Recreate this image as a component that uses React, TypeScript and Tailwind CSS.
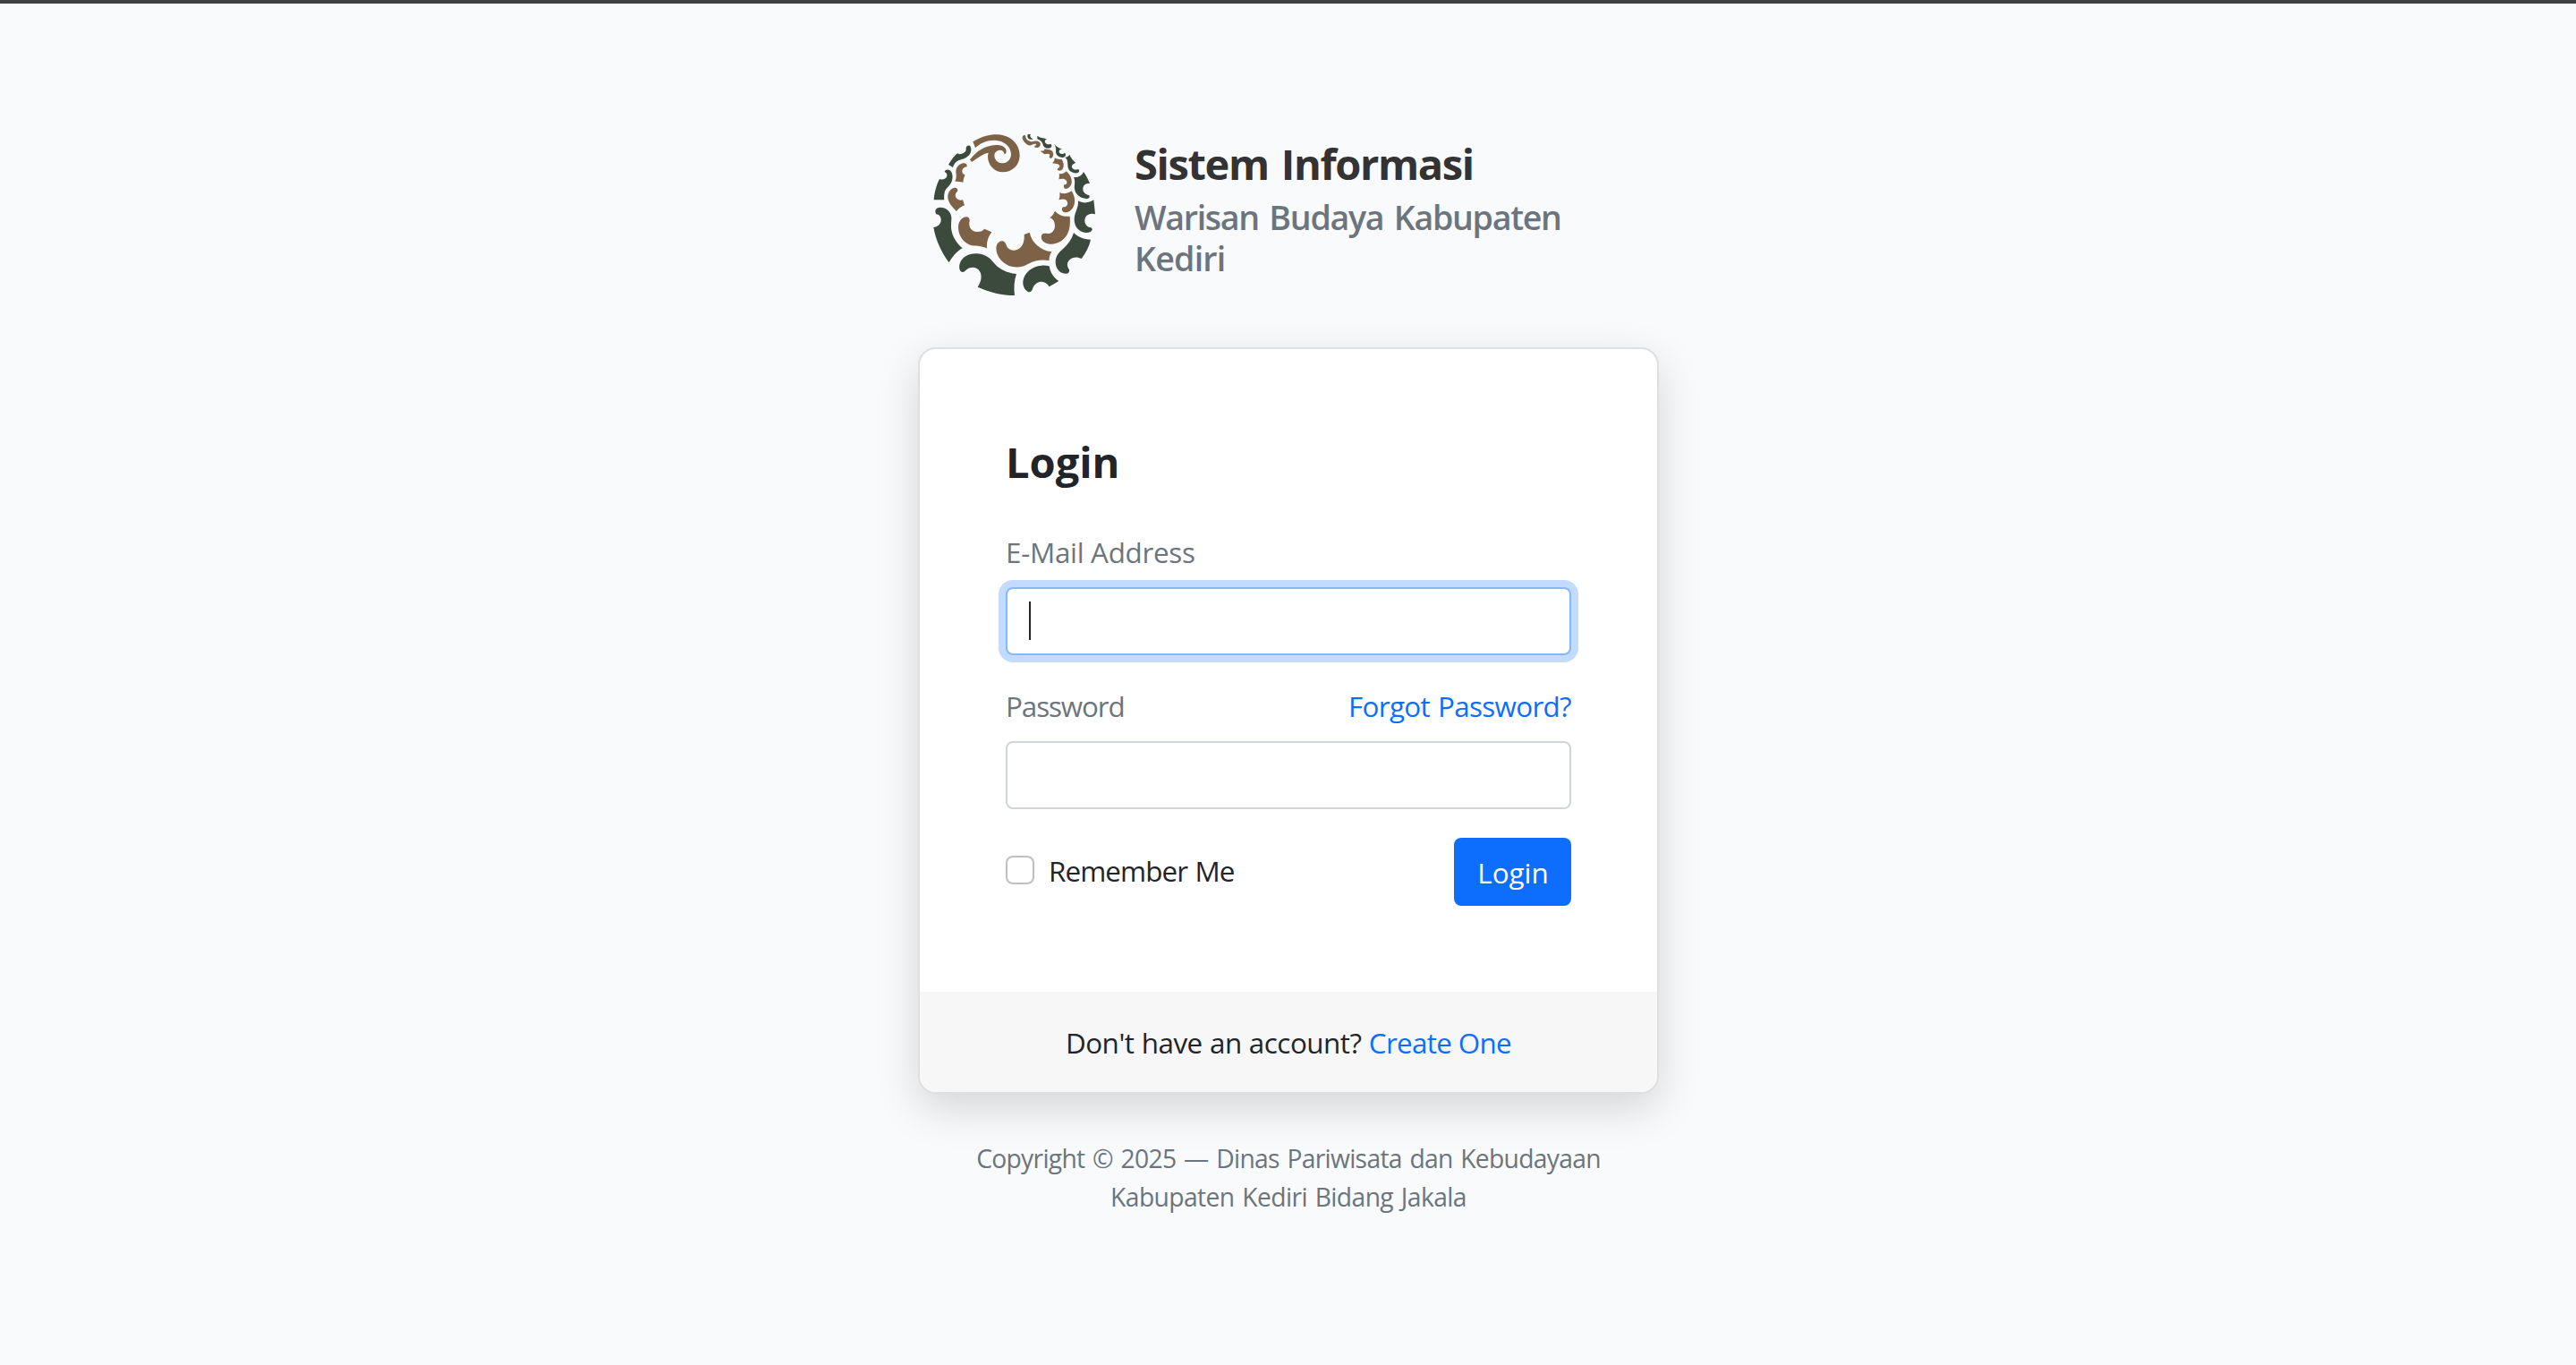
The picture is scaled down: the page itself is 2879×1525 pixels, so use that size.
import React from "react";

const GREEN = [
  "M90 132C100 115 110 102 120 94L127 97C140 95 150 88 149 80C148 70 155 66 161 68C168 74 167 88 162 96C155 108 140 113 128 116C115 120 108 130 105 141Z",
  "M41 250C43 222 51 198 60 180C70 184 82 180 85 170C87 163 82 159 77 156C80 148 88 147 95 151C104 158 106 175 101 188C96 203 80 210 77 225C75 235 75 242 76 250Z",
  "M40 342C52 341 64 333 65 319C66 306 58 299 49 298C43 288 46 278 58 276C78 273 98 288 100 308C101 320 97 333 100 350C104 375 118 395 137 412C118 422 103 440 92 460C68 428 47 385 40 342Z",
  "M188 542C200 525 203 505 196 491C189 478 175 474 161 478C150 482 146 492 138 492C128 491 125 480 127 468C132 442 158 429 185 430C208 431 224 440 238 456C258 482 285 495 318 498C310 520 309 545 312 570C270 570 228 560 188 542Z",
  "M428 541C422 530 411 523 400 524C384 526 377 535 372 548C370 556 364 560 357 558C345 552 339 538 340 523C343 495 370 472 402 470C412 469 420 470 428 472C431 493 443 511 460 522Z",
  "M510 360C525 375 543 382 567 383C562 406 551 427 536 447C523 440 508 441 498 449C487 458 486 470 494 482C498 491 492 498 481 497C463 496 448 478 449 455C451 435 462 424 475 413C492 399 504 380 510 360Z",
  "M525 253C543 263 562 260 577 250L582 298C570 294 557 297 550 307C543 320 548 337 562 342C568 341 573 345 572 350C568 360 552 362 538 357C519 349 511 332 512 312C514 290 527 275 525 253Z",
  "M543 156C552 168 558 180 564 195C550 193 541 201 541 213C541 225 550 232 561 234C566 240 562 246 552 246C533 245 516 233 513 214C511 200 517 188 510 174C525 176 538 168 543 156Z",
  "M496 98C500 108 508 118 517 126C510 128 502 133 504 141C507 148 517 151 525 147C530 150 530 157 523 160C510 162 496 156 492 145C487 130 494 118 481 107C487 107 493 104 496 98Z",
  "M445 62C452 72 461 77 471 79C463 81 458 87 463 93C468 98 476 96 480 92C486 97 482 107 474 108C463 109 453 102 451 94C449 84 453 76 445 62Z",
  "M388 35C398 43 408 41 420 46C413 49 411 55 416 60C421 65 428 64 433 62C438 66 437 73 431 76C422 79 412 76 408 68C405 57 400 50 388 46Z",
  "M356 30L366 30C361 36 366 42 374 47C367 49 356 46 355 38Z",
];

const BROWN = [
  "M172 55C205 35 232 30 255 31C300 33 330 65 329 103C328 135 303 157 273 157C243 156 222 133 222 104C222 98 223 95 225 92C205 95 190 108 168 123L162 115C180 92 200 75 232 68C262 62 284 70 284 88C284 93 281 97 278 97C276 85 266 82 258 84C247 87 242 97 245 108C249 122 262 128 273 127C290 125 300 112 300 96C299 70 275 51 246 50C220 49 200 58 180 75Z",
  "M112 188C117 178 117 170 115 157C115 138 128 128 142 127C150 127 153 133 152 139C143 140 135 146 136 155C137 162 141 165 146 166C142 174 140 182 139 191C130 188 122 188 112 188Z",
  "M117 288C105 275 90 262 88 242C87 224 98 210 112 209C120 209 123 216 120 222C114 226 111 235 116 243C122 252 132 252 138 250L144 268C133 272 124 279 117 288Z",
  "M219 413C203 404 187 405 168 403C142 396 122 370 123 340C124 320 138 306 152 307C162 309 162 318 160 327C158 345 170 357 187 357C198 357 206 353 211 347L235 358C224 372 217 390 219 413Z",
  "M344 366L362 359C370 395 398 418 436 424C430 433 427 443 428 453C400 449 382 452 358 464C343 473 325 478 305 474C272 467 249 438 250 410C252 395 262 386 272 388C283 391 283 404 290 412C302 424 322 420 333 408C343 397 345 380 344 366Z",
  "M447 287C458 300 475 307 497 305C499 325 497 345 492 357C482 385 455 399 432 398C412 397 398 385 402 370C404 362 412 362 422 363C436 364 446 353 447 338C447 324 441 313 430 310C438 304 443 296 447 287Z",
  "M463 225C478 232 490 228 503 220C512 235 516 250 512 265C507 284 493 293 480 292C470 290 468 280 474 274C485 275 491 268 489 258C486 247 476 245 460 250C464 242 464 234 463 225Z",
  "M461 162C470 164 478 161 485 154C498 165 505 180 503 193C501 205 492 213 483 213C476 211 475 204 478 199C486 200 489 193 486 186C480 178 470 178 460 181C462 175 462 168 461 162Z",
  "M446 109C455 116 464 113 470 114C477 125 478 136 474 145C469 154 457 154 455 148C456 143 462 143 463 138C464 131 452 128 438 127C443 122 447 116 446 109Z",
  "M412 79C420 82 428 80 436 85C444 92 443 104 436 110C430 112 426 107 429 103C433 97 425 93 412 97L410 95C405 91 400 91 400 85C408 88 413 84 412 79Z",
  "M340 35C344 32 350 33 349 39C350 48 360 54 371 55C379 53 390 50 397 58C401 65 397 74 388 75C377 75 375 71 384 66C388 62 378 60 370 65C364 71 350 65 343 54C337 45 336 39 340 35Z",
];

function Logo() {
  return (
    <svg viewBox="0 0 600 600" className="ml-1 h-[200px] w-[200px] shrink-0">
      <g fill="#3c4a3e">
        {GREEN.map((d) => (
          <path key={d} d={d} />
        ))}
      </g>
      <g fill="#7d6248">
        {BROWN.map((d) => (
          <path key={d} d={d} />
        ))}
      </g>
    </svg>
  );
}

export default function App() {
  return (
    <div
      className="h-[1525px] overflow-hidden border-t-4 border-[#404142] bg-[#f8fafc] pt-[136px] pl-px text-[31.4px] leading-[48px] text-[#212529]"
      style={{ fontFamily: '"Open Sans", "Noto Sans", sans-serif' }}
    >
      <main className="mx-auto w-[828px]">
        <header className="flex h-[248px]">
          <Logo />
          <div className="ml-[38px] pt-[14px] whitespace-nowrap">
            <h1 className="text-[47px] leading-[58px] font-bold tracking-[-1.35px] text-[#333333] [word-spacing:3px]">
              Sistem Informasi
            </h1>
            <h2 className="mt-2 text-[37.6px] leading-[46px] font-semibold text-[#6c757d]">
              <span className="block tracking-[-1.3px] [word-spacing:3px]">Warisan Budaya Kabupaten</span>
              <span className="block tracking-[-0.8px]">Kediri</span>
            </h2>
          </div>
        </header>

        <section className="rounded-[20px] border-2 border-[#dfdfdf] bg-white shadow-[0_16px_48px_rgba(0,0,0,0.15)]">
          <form className="px-24 pt-[97px] pb-24" onSubmit={(e) => e.preventDefault()}>
            <h1 className="mb-12 text-[47px] leading-[58px] font-bold">Login</h1>

            <label className="mb-[15px] block tracking-[-0.3px] text-[#6c757d]">E-Mail Address</label>
            <div className="flex h-[76px] items-start rounded-lg border-2 border-[#86b7fe] bg-white pt-[14px] pl-6 shadow-[0_0_0_8px_#c2dbff]">
              <span className="h-[43px] w-0.5 bg-[#212529]" />
            </div>

            <div className="mt-[33px] mb-[15px] flex justify-between">
              <label className="tracking-[-1.1px] text-[#6c757d]">Password</label>
              <a className="tracking-[-0.67px] text-[#0d6efd] [word-spacing:1.5px]">Forgot Password?</a>
            </div>
            <div className="h-[76px] rounded-lg border-2 border-[#ced4da] bg-white" />

            <div className="mt-8 flex h-[76px] items-start">
              <span className="mt-5 h-8 w-8 rounded-lg border-2 border-[#bfbfbf] bg-white" />
              <label className="mt-[13px] ml-4 tracking-[-0.9px] [word-spacing:1px]">Remember Me</label>
              <button className="ml-auto flex h-[76px] w-[131px] justify-center rounded-lg bg-[#0d6efd] pt-[15px] pl-px leading-[48px] text-white">
                Login
              </button>
            </div>
          </form>
          <footer className="h-[112px] rounded-b-[18px] bg-[#f7f7f7] pt-[33px] text-center">
            <span className="tracking-[-0.48px] [word-spacing:0.5px]">Don't have an account? </span>
            <a className="tracking-[-0.67px] text-[#0d6efd]">Create One</a>
          </footer>
        </section>

        <p className="mt-[51px] text-center text-[28.25px] leading-[43px] text-[#6c757d]">
          <span className="block tracking-[-0.7px] [word-spacing:2px]">
            Copyright © 2025 — Dinas Pariwisata dan Kebudayaan
          </span>
          <span className="block tracking-[-0.6px] [word-spacing:2px]">Kabupaten Kediri Bidang Jakala</span>
        </p>
      </main>
    </div>
  );
}
